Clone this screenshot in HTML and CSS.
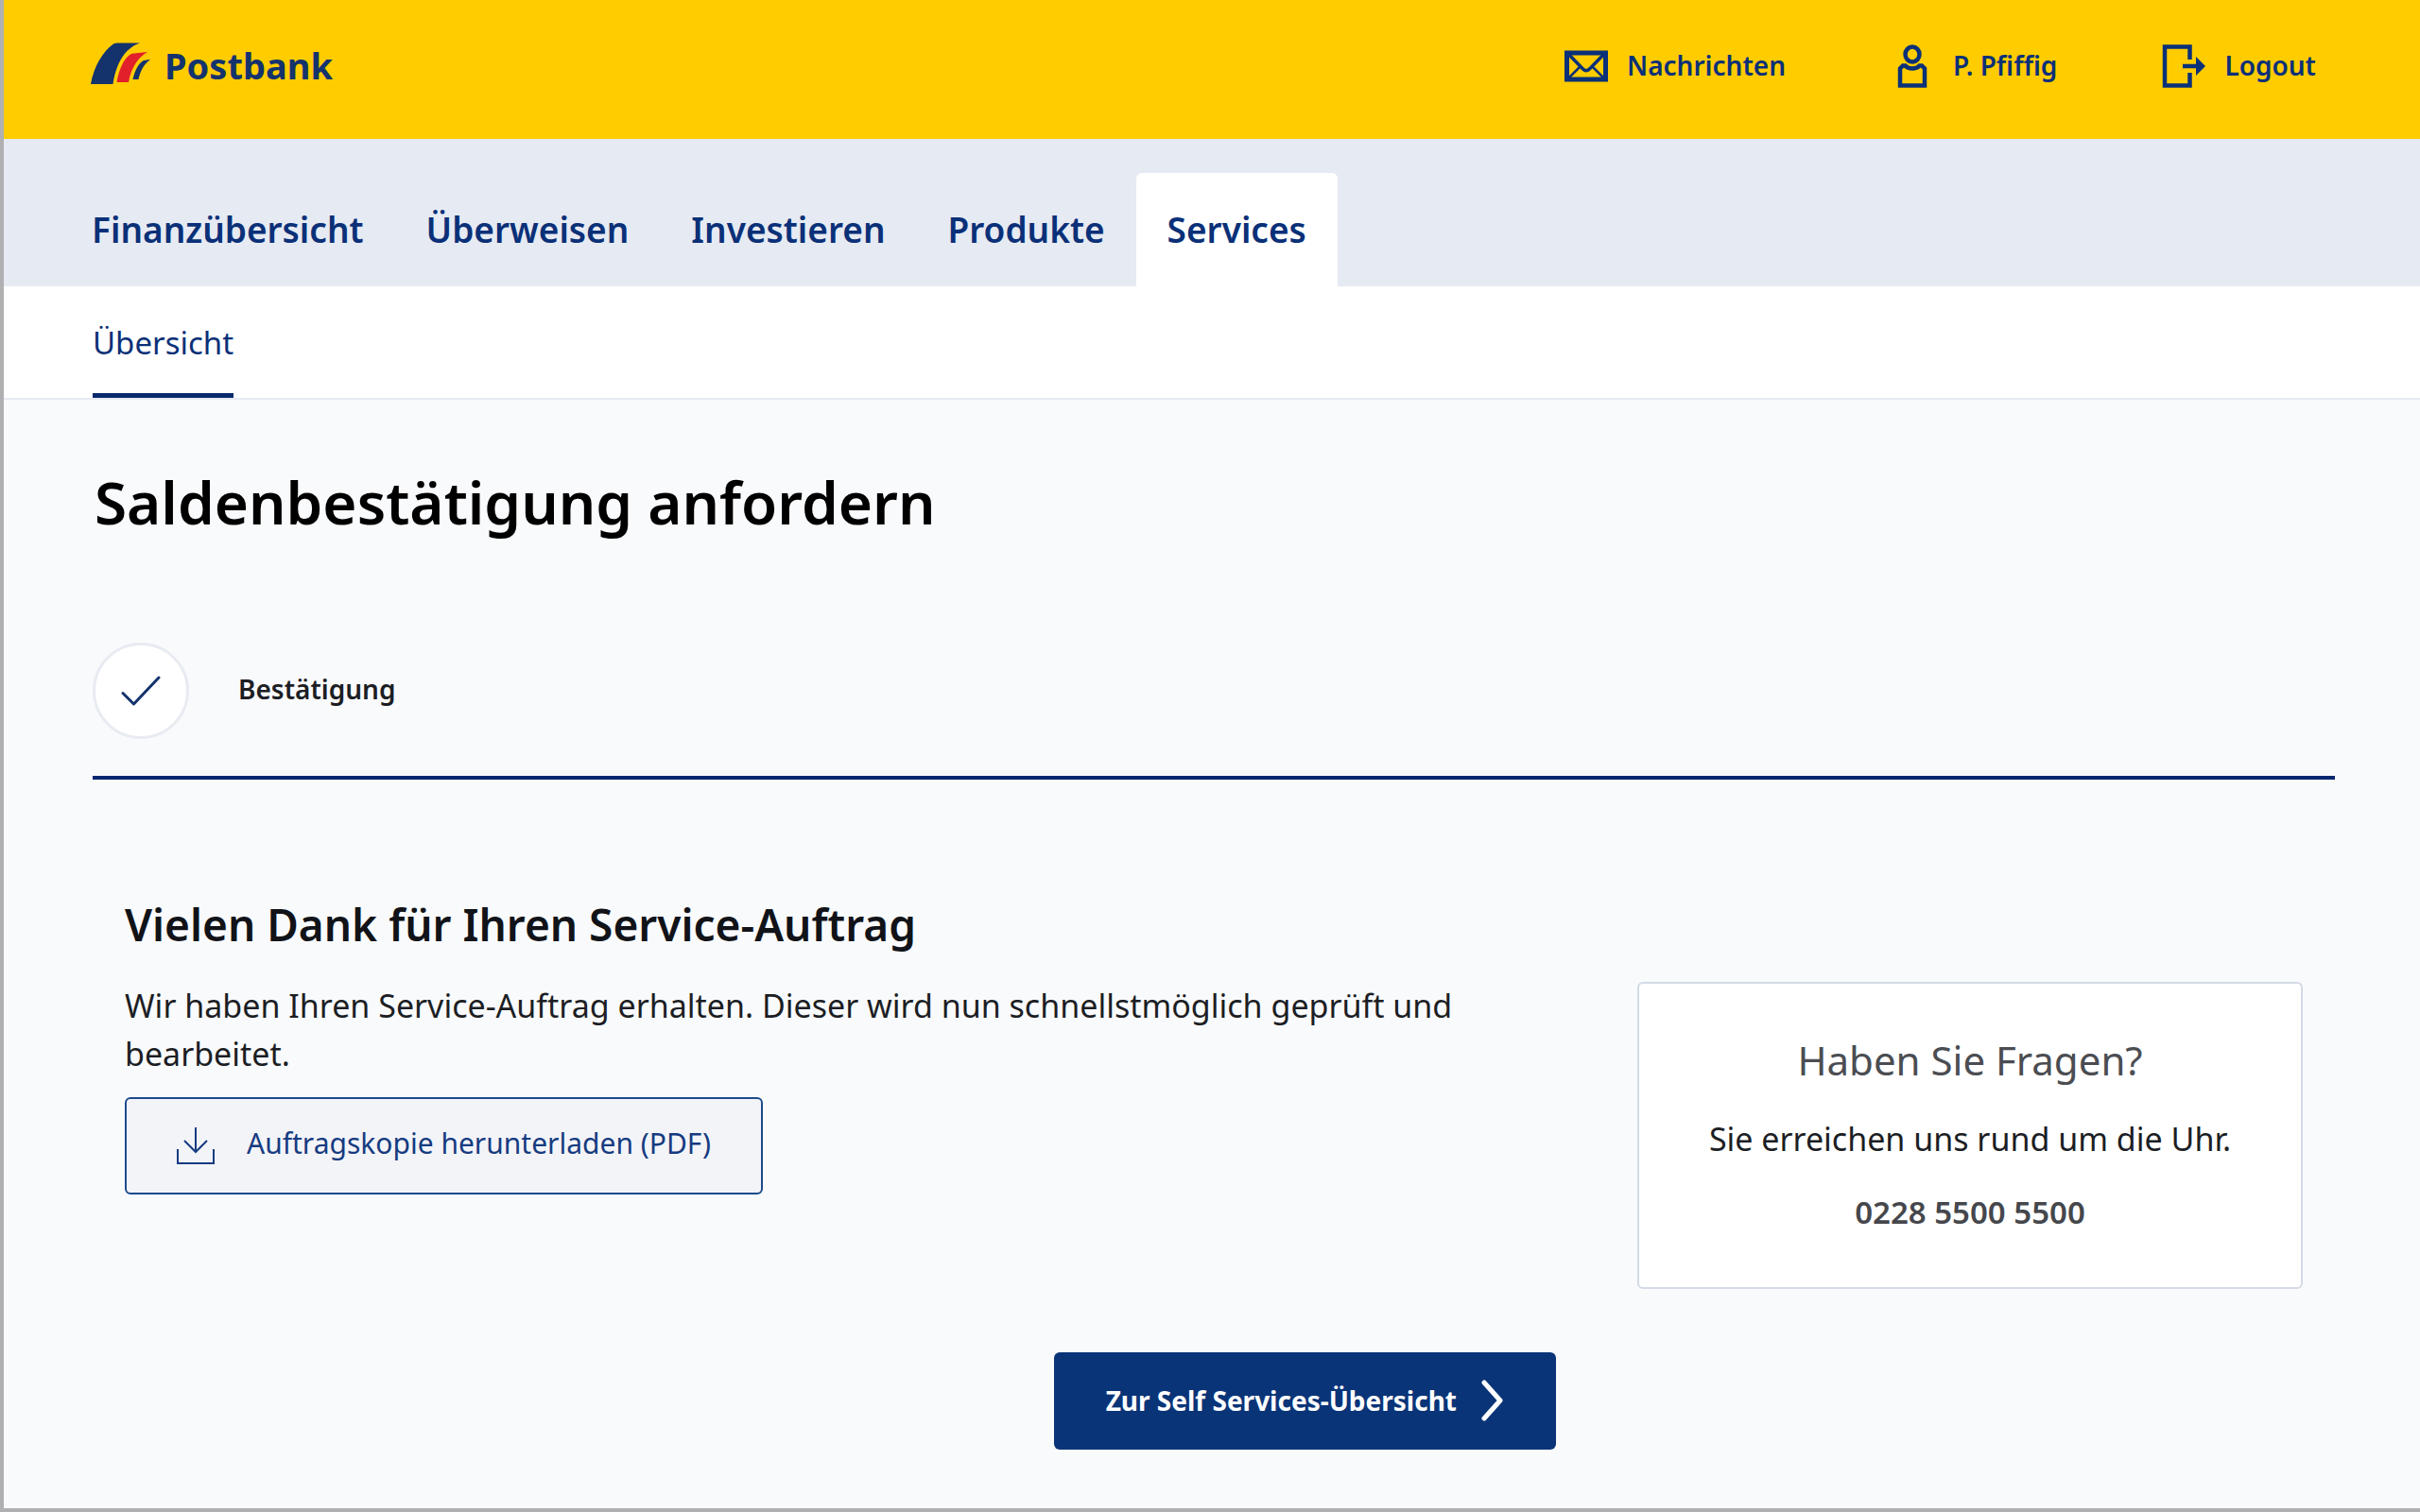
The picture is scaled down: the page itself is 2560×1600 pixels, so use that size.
FILE: index.html
```html
<!DOCTYPE html>
<html lang="de">
<head>
<meta charset="utf-8">
<meta name="viewport" content="width=device-width, initial-scale=1">
<title>Saldenbestätigung anfordern – Postbank</title>
<link rel="stylesheet" href="styles.css">
</head>
<body>
<div class="frame">
  <header class="topbar">
    <a class="brand" href="#">
      <svg class="brand-mark" viewBox="0 0 62 44" aria-hidden="true">
        <path fill="#14336d" d="M0 44C3 26 13 9 24 1.500Q26 .5 28 .500H52C39 5 28 17 23.500 44Z"/>
        <path fill="#e2202c" d="M27.500 42C30 28 35 17 42 12.500Q43.500 11.500 46 11.500L60 10C50 16 43 26 40 42Z"/>
        <path fill="#14336d" d="M44.500 39C46.500 30 50 23 55 19.500Q56.500 18.500 63 18C56 23 52.500 30 50.500 39Z"/>
      </svg>
      <span>Postbank</span>
    </a>
    <nav class="account" aria-label="Konto">
      <a class="account-link" href="#">
        <svg class="account-icon" viewBox="0 0 46 46" aria-hidden="true">
          <g fill="none" stroke="currentColor"><path stroke-width="5" d="M2.500 9H43.500V37H2.500Z"/><path stroke-width="3.500" d="M4 10L19.500 26Q23 29.500 26.500 26L42 10"/><path stroke-width="2.500" d="M5 35L16 24M41 35L30 24"/></g>
        </svg>
        <span>Nachrichten</span>
      </a>
      <a class="account-link" href="#">
        <svg class="account-icon" viewBox="0 0 46 46" aria-hidden="true">
          <g fill="none" stroke="currentColor" stroke-width="4.500"><ellipse cx="23" cy="10.500" rx="7.500" ry="8"/><path d="M10 43.500V25.500L13 22.500H15.500Q18 25.500 23 25.500T30.500 22.500H33L36 25.500V43.500Z"/></g>
        </svg>
        <span>P. Pfiffig</span>
      </a>
      <a class="account-link" href="#">
        <svg class="account-icon" viewBox="0 0 46 46" aria-hidden="true">
          <path fill="none" stroke="currentColor" stroke-width="4.500" d="M29.500 16V2.500H3V43.500H29.500V30M22 23H39"/>
          <path fill="currentColor" d="M36 13L46 23L36 33Z"/>
        </svg>
        <span>Logout</span>
      </a>
    </nav>
  </header>

  <nav class="mainnav" aria-label="Hauptnavigation">
    <a class="tab" href="#">Finanzübersicht</a>
    <a class="tab" href="#">Überweisen</a>
    <a class="tab" href="#">Investieren</a>
    <a class="tab" href="#">Produkte</a>
    <a class="tab tab-active" href="#" aria-current="page">Services</a>
  </nav>
  <nav class="subnav" aria-label="Services">
    <a class="subnav-link" href="#" aria-current="page">Übersicht</a>
  </nav>

  <main class="page">
    <h1 class="page-title">Saldenbestätigung anfordern</h1>
    <div class="step">
      <span class="step-badge">
        <svg class="step-check" viewBox="0 0 42 32" aria-hidden="true"><path fill="none" stroke="currentColor" stroke-width="3" stroke-linecap="round" stroke-linejoin="round" d="M2 18.500L13.500 30L40 2"/></svg>
      </span>
      <span class="step-label">Bestätigung</span>
    </div>

    <div class="content">
      <section class="result">
        <h2 class="result-title">Vielen Dank für Ihren Service-Auftrag</h2>
        <p class="result-text">Wir haben Ihren Service-Auftrag erhalten. Dieser wird nun schnellstmöglich geprüft und bearbeitet.</p>
        <button class="btn btn-secondary" type="button">
          <svg class="download-icon" viewBox="0 0 40 40" aria-hidden="true"><path fill="none" stroke="currentColor" stroke-width="2" d="M20 0V26M8 14L20 26L32 14M1 23V38H39V23"/></svg>
          <span>Auftragskopie herunterladen (PDF)</span>
        </button>
        <button class="btn btn-primary" type="button">
          <span>Zur Self Services-Übersicht</span>
          <svg class="chevron" viewBox="0 0 24 44" aria-hidden="true"><path fill="none" stroke="currentColor" stroke-width="5" stroke-linecap="round" stroke-linejoin="round" d="M3 3L20 22L3 41"/></svg>
        </button>
      </section>
      <aside class="contact">
        <h2 class="contact-title">Haben Sie Fragen?</h2>
        <p class="contact-text">Sie erreichen uns rund um die Uhr.</p>
        <p class="contact-phone">0228 5500 5500</p>
      </aside>
    </div>
  </main>
</div>
</body>
</html>
```
FILE: styles.css
```css
:root {
  --navy: #0a3078;
  --yellow: #ffcc00;
  --band: #e6eaf2;
  --page: #f9fafc;
  --frame: #b0b0b3;
}

* { box-sizing: border-box; }

body {
  margin: 0;
  background: var(--page);
  color: #1c1e24;
  font-family: "Noto Sans", "Open Sans", sans-serif;
  font-size: 34px;
  line-height: 51px;
}

a { color: inherit; text-decoration: none; }
h1, h2, p { margin: 0; }
svg { display: block; flex: none; }

.frame {
  min-height: 100vh;
  border-left: 4px solid var(--frame);
  border-bottom: 4px solid var(--frame);
}

/* Header */
.topbar {
  display: flex;
  align-items: center;
  justify-content: space-between;
  min-height: 147px;
  padding: 0 110px 8px 92px;
  background: var(--yellow);
  color: var(--navy);
}

.brand {
  display: flex;
  align-items: center;
  gap: 16px;
  color: #14336d;
  font-size: 38px;
  font-weight: 700;
}
.brand-mark { width: 62px; height: 44px; overflow: visible; margin-bottom: 6px; }

.account { display: flex; gap: 111px; }
.account-link {
  display: flex;
  align-items: center;
  gap: 20px;
  font-size: 28px;
  font-weight: 600;
}
.account-icon { width: 46px; height: 46px; }

/* Navigation */
.mainnav {
  display: flex;
  align-items: flex-end;
  padding: 36px 60px 0;
  background: var(--band);
}
.tab {
  padding: 0 33px;
  border-radius: 6px 6px 0 0;
  color: var(--navy);
  font-size: 37px;
  font-weight: 600;
  line-height: 120px;
}
.tab-active { background: #fff; }

.subnav {
  display: flex;
  padding: 6px 94px 0;
  border-bottom: 2px solid var(--band);
  background: #fff;
}
.subnav-link {
  border-bottom: 5px solid #06296e;
  color: var(--navy);
  font-size: 33px;
  line-height: 107px;
}

/* Page */
.page { padding: 68px 90px 60px 94px; }
.page-title {
  padding-left: 2px;
  color: #000;
  font-size: 62px;
  font-weight: 600;
  line-height: 80px;
}

.step {
  display: flex;
  align-items: center;
  gap: 52px;
  margin-top: 109px;
  padding-bottom: 39px;
  border-bottom: 4px solid #06296e;
}
.step-badge {
  display: flex;
  align-items: center;
  justify-content: center;
  width: 102px;
  height: 102px;
  border: 3px solid #e8ebf1;
  border-radius: 50%;
  background: #fff;
  color: #14336d;
}
.step-check { width: 42px; height: 32px; }
.step-label { padding-bottom: 4px; font-size: 28px; font-weight: 600; }

.content {
  display: grid;
  grid-template-columns: 1fr 704px;
  gap: 86px;
  align-items: start;
  padding: 123px 34px 0;
}

.result { display: flex; flex-direction: column; }
.result-title {
  margin-bottom: 31px;
  color: #111318;
  font-size: 46px;
  font-weight: 600;
  line-height: 60px;
}
.result-text { margin-bottom: 20px; }

.btn {
  display: flex;
  align-items: center;
  height: 103px;
  border-radius: 6px;
  font-family: inherit;
  cursor: pointer;
}
.btn-secondary {
  align-self: flex-start;
  gap: 34px;
  padding: 0 53px 6px;
  border: 2px solid #1d4a8c;
  background: #f3f4f8;
  color: #163b80;
  font-size: 30px;
}
.download-icon { width: 40px; height: 40px; margin-top: 6px; }

.btn-primary {
  align-self: flex-end;
  gap: 26px;
  margin-top: 167px;
  padding: 0 55px 2px;
  border: 0;
  background: #0a3478;
  color: #fff;
  font-size: 28px;
  font-weight: 700;
}
.chevron { width: 24px; height: 44px; }

.contact {
  margin-top: 91px;
  padding: 51px 40px 54px;
  border: 2px solid #d3dae6;
  border-radius: 6px;
  background: #fff;
  text-align: center;
}
.contact-title {
  margin-bottom: 28px;
  color: #4b4d52;
  font-size: 42px;
  font-weight: 400;
  line-height: 60px;
}
.contact-text { margin-bottom: 26px; }
.contact-phone { color: #45474c; font-size: 33px; font-weight: 600; }
```
